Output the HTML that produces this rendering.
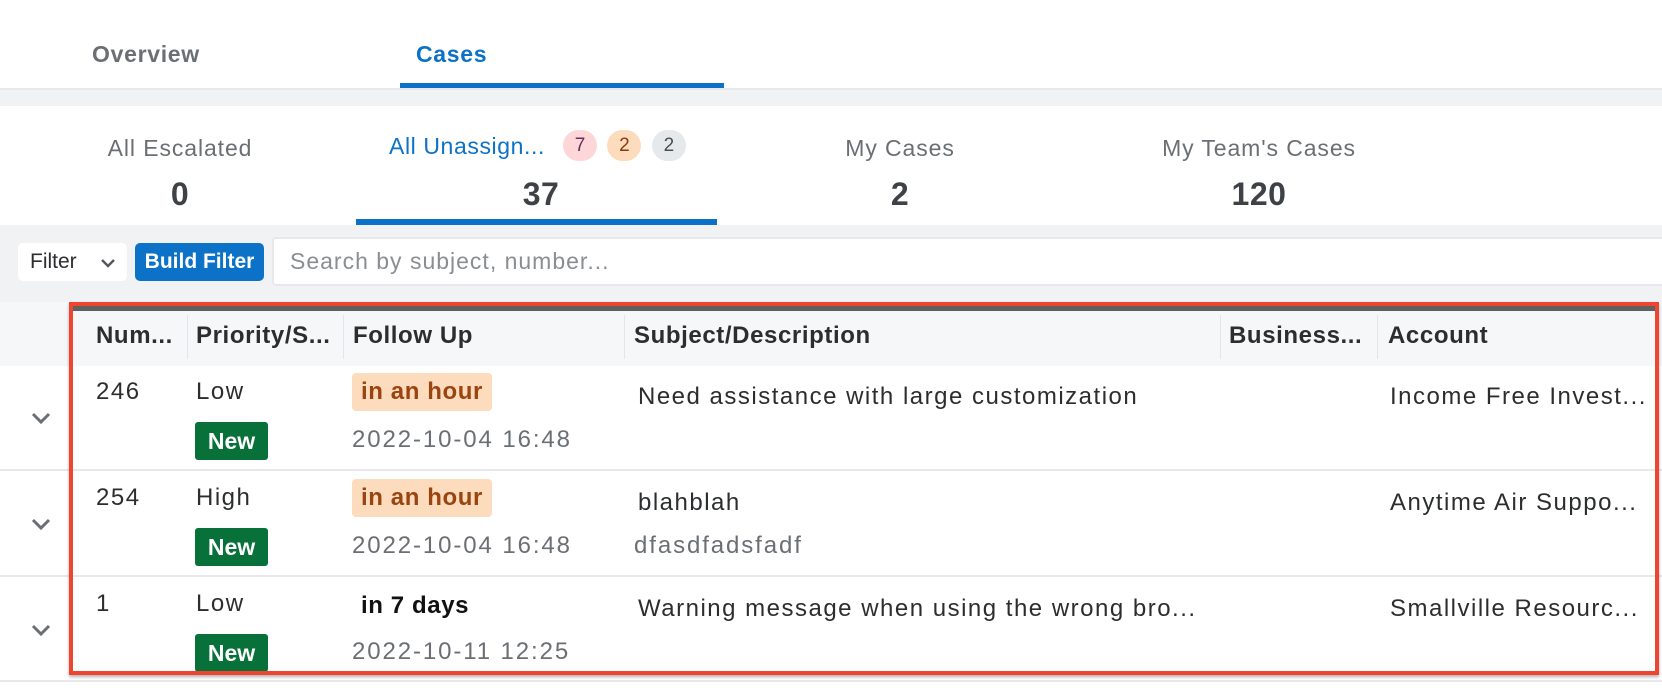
<!DOCTYPE html>
<html><head><meta charset="utf-8"><style>
*{margin:0;padding:0;box-sizing:border-box}
body{width:1662px;height:692px;background:#fff;font-family:"Liberation Sans",sans-serif;position:relative;overflow:hidden;color:#2b2d2f}
.a{position:absolute;white-space:nowrap}
.tab{font-size:23px;font-weight:bold;color:#6b6f73;letter-spacing:.7px}
.lbl{font-size:23px;color:#6b6f73;transform:translateX(-50%);letter-spacing:.9px}
.num{font-size:32px;font-weight:bold;color:#3e4246;transform:translateX(-50%);letter-spacing:.5px}
.pill{display:inline-block;width:34px;height:31px;border-radius:16px;text-align:center;line-height:31px;font-size:19px}
.h{font-size:24px;font-weight:bold;color:#2b2d2f;top:322px;letter-spacing:.6px}
.div{position:absolute;top:315px;width:1px;height:44px;background:#e3e5e8}
.t{font-size:24px;color:#2b2d2f;letter-spacing:1.5px}
.g{font-size:24px;color:#6b6f73;letter-spacing:1.9px}
.orange{background:#fddcbd;color:#9a4411;font-weight:bold;font-size:24px;padding:0 9px;height:38px;line-height:38px;border-radius:4px;letter-spacing:.6px}
.new{background:#08713a;color:#fff;font-weight:bold;font-size:23px;width:73px;height:38px;line-height:38px;text-align:center;border-radius:3px}
.chev{position:absolute;left:31px;width:20px;height:12px}
.row{position:absolute;left:0;width:1662px;height:2px;background:#e6e8eb}
</style></head><body>
<div class="a tab" style="left:92px;top:41px">Overview</div>
<div class="a tab" style="left:416px;top:41px;color:#0b72c7">Cases</div>
<div class="a" style="left:400px;top:83px;width:324px;height:6px;background:#0b72c7"></div>
<div class="a" style="left:0;top:88px;width:1662px;height:18px;background:#f0f2f4;border-top:2px solid #e6e8eb"></div>

<div class="a lbl" style="left:180px;top:135px">All Escalated</div>
<div class="a num" style="left:180px;top:176px">0</div>
<div class="a" style="left:389px;top:133px;font-size:23px;color:#0b72c7;letter-spacing:.6px">All Unassign...</div>
<div class="a" style="left:563px;top:130px"><span class="pill" style="background:#fdd7d7;color:#6b2d64">7</span> <span class="pill" style="background:#fddcbd;color:#8a3a10;margin-left:6px">2</span> <span class="pill" style="background:#e6e9ec;color:#4a4e52;margin-left:6px">2</span></div>
<div class="a num" style="left:541px;top:176px">37</div>
<div class="a" style="left:356px;top:219px;width:361px;height:6px;background:#0b72c7"></div>
<div class="a lbl" style="left:900px;top:135px">My Cases</div>
<div class="a num" style="left:900px;top:176px">2</div>
<div class="a lbl" style="left:1259px;top:135px">My Team's Cases</div>
<div class="a num" style="left:1259px;top:176px">120</div>

<div class="a" style="left:0;top:225px;width:1662px;height:77px;background:#f0f2f4"></div>
<div class="a" style="left:18px;top:243px;width:109px;height:38px;background:#fff;border-radius:5px;font-size:21px;line-height:38px;padding-left:12px;color:#2b2d2f">Filter <svg style="position:absolute;left:82px;top:15px" width="16" height="10" viewBox="0 0 16 10"><path d="M2 2l6 6 6-6" fill="none" stroke="#55595d" stroke-width="2.4"/></svg></div>
<div class="a" style="left:135px;top:243px;width:129px;height:38px;background:#0b72c7;border-radius:5px;color:#fff;font-weight:bold;font-size:21px;line-height:38px;text-align:center">Build Filter</div>
<div class="a" style="left:272px;top:237px;width:1400px;height:49px;background:#fff;border:2px solid #e6e8eb;border-radius:4px;font-size:23px;line-height:45px;padding-left:16px;color:#8a8e92;letter-spacing:1px">Search by subject, number...</div>

<div class="a" style="left:0;top:302px;width:1662px;height:64px;background:#f6f7f9"></div>
<div class="a" style="left:73px;top:306px;width:1582px;height:5px;background:#3a3a3a;opacity:.8"></div>
<div class="a h" style="left:96px">Num...</div>
<div class="a h" style="left:196px">Priority/S...</div>
<div class="a h" style="left:353px">Follow Up</div>
<div class="a h" style="left:634px">Subject/Description</div>
<div class="a h" style="left:1229px">Business...</div>
<div class="a h" style="left:1388px">Account</div>
<div class="div" style="left:187px"></div><div class="div" style="left:343px"></div><div class="div" style="left:624px"></div><div class="div" style="left:1220px"></div><div class="div" style="left:1377px"></div>

<div class="row" style="top:469px"></div>
<div class="row" style="top:575px"></div>
<div class="row" style="top:680px"></div>

<svg class="chev" style="top:412px" viewBox="0 0 20 12"><path d="M2 2l8 8 8-8" fill="none" stroke="#6b6f73" stroke-width="3"/></svg>
<svg class="chev" style="top:518px" viewBox="0 0 20 12"><path d="M2 2l8 8 8-8" fill="none" stroke="#6b6f73" stroke-width="3"/></svg>
<svg class="chev" style="top:624px" viewBox="0 0 20 12"><path d="M2 2l8 8 8-8" fill="none" stroke="#6b6f73" stroke-width="3"/></svg>

<div class="a t" style="left:96px;top:378px">246</div>
<div class="a t" style="left:196px;top:378px">Low</div>
<div class="a new" style="left:195px;top:422px">New</div>
<div class="a orange" style="left:352px;top:373px">in an hour</div>
<div class="a g" style="left:352px;top:426px">2022-10-04 16:48</div>
<div class="a t" style="left:638px;top:383px">Need assistance with large customization</div>
<div class="a t" style="left:1390px;top:383px">Income Free Invest...</div>

<div class="a t" style="left:96px;top:484px">254</div>
<div class="a t" style="left:196px;top:484px">High</div>
<div class="a new" style="left:195px;top:528px">New</div>
<div class="a orange" style="left:352px;top:479px">in an hour</div>
<div class="a g" style="left:352px;top:532px">2022-10-04 16:48</div>
<div class="a t" style="left:638px;top:489px">blahblah</div>
<div class="a g" style="left:634px;top:532px">dfasdfadsfadf</div>
<div class="a t" style="left:1390px;top:489px">Anytime Air Suppo...</div>

<div class="a t" style="left:96px;top:590px">1</div>
<div class="a t" style="left:196px;top:590px">Low</div>
<div class="a new" style="left:195px;top:634px">New</div>
<div class="a" style="left:361px;top:592px;font-size:24px;font-weight:bold;color:#111;letter-spacing:.6px">in 7 days</div>
<div class="a g" style="left:352px;top:638px">2022-10-11 12:25</div>
<div class="a t" style="left:638px;top:595px">Warning message when using the wrong bro...</div>
<div class="a t" style="left:1390px;top:595px">Smallville Resourc...</div>

<div class="a" style="left:69px;top:302px;width:1590px;height:373px;border:4px solid #ee4430;box-shadow:0 2px 3px rgba(0,0,0,.3)"></div>
</body></html>
